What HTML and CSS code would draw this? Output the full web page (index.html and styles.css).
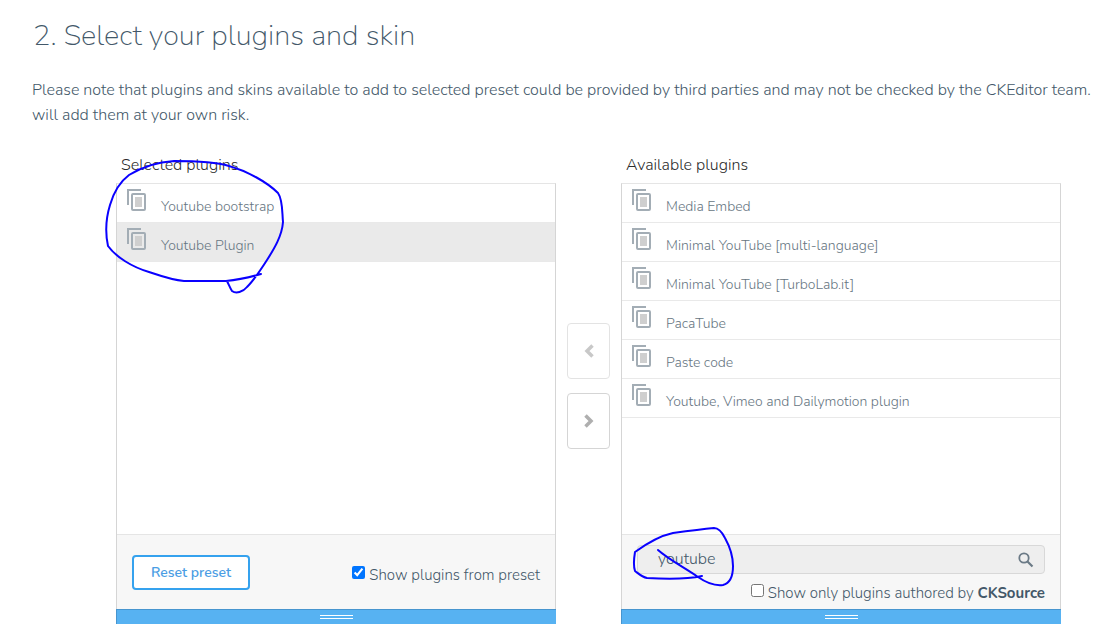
FILE: index.html
```html
<!DOCTYPE html>
<html lang="en">
<head>
    <meta charset="UTF-8">
    <meta name="viewport" content="width=device-width, initial-scale=1.0">
    <title>Select your plugins and skin</title>
    <link rel="stylesheet" href="styles.css">
</head>
<body>
    <svg class="symbols" aria-hidden="true">
        <symbol id="plugin-icon" viewBox="0 0 20 22">
            <path d="M1 16V1H14" fill="none" stroke="#a3adb5" stroke-width="2"/>
            <rect x="5" y="5" width="13" height="16" rx="1" fill="none" stroke="#a3adb5" stroke-width="2"/>
            <rect x="8" y="8" width="7" height="10" fill="#cfcfcf"/>
        </symbol>
    </svg>

    <main class="builder">
        <h1>2. Select your plugins and skin</h1>
        <p class="intro">Please note that plugins and skins available to add to selected preset could be provided by third parties and may not be checked by the CKEditor team.<br>will add them at your own risk.</p>

        <div class="columns">
            <section class="column">
                <h2>Selected plugins</h2>
                <div class="panel">
                    <ul class="plugin-list">
                        <li class="plugin"><svg class="plugin-icon"><use href="#plugin-icon"/></svg><span>Youtube bootstrap</span></li>
                        <li class="plugin plugin-active"><svg class="plugin-icon"><use href="#plugin-icon"/></svg><span>Youtube Plugin</span></li>
                    </ul>
                    <div class="panel-footer preset-footer">
                        <button type="button" class="reset-button">Reset preset</button>
                        <label class="check"><input type="checkbox" checked><span>Show plugins from preset</span></label>
                    </div>
                </div>
                <div class="resize-bar"><span class="grip"></span></div>
            </section>

            <div class="move-buttons">
                <button type="button" class="move-button" aria-label="Add plugin" disabled>
                    <svg width="10" height="14" viewBox="0 0 10 14"><path d="M8.500 1.500L3 7l5.500 5.500" fill="none" stroke="currentColor" stroke-width="3.500"/></svg>
                </button>
                <button type="button" class="move-button" aria-label="Remove plugin">
                    <svg width="10" height="14" viewBox="0 0 10 14"><path d="M1.500 1.500L7 7l-5.500 5.500" fill="none" stroke="currentColor" stroke-width="3.500"/></svg>
                </button>
            </div>

            <section class="column">
                <h2>Available plugins</h2>
                <div class="panel">
                    <ul class="plugin-list">
                        <li class="plugin"><svg class="plugin-icon"><use href="#plugin-icon"/></svg><span>Media Embed</span></li>
                        <li class="plugin"><svg class="plugin-icon"><use href="#plugin-icon"/></svg><span>Minimal YouTube [multi-language]</span></li>
                        <li class="plugin"><svg class="plugin-icon"><use href="#plugin-icon"/></svg><span>Minimal YouTube [TurboLab.it]</span></li>
                        <li class="plugin"><svg class="plugin-icon"><use href="#plugin-icon"/></svg><span>PacaTube</span></li>
                        <li class="plugin"><svg class="plugin-icon"><use href="#plugin-icon"/></svg><span>Paste code</span></li>
                        <li class="plugin"><svg class="plugin-icon"><use href="#plugin-icon"/></svg><span>Youtube, Vimeo and Dailymotion plugin</span></li>
                    </ul>
                    <div class="panel-footer search-footer">
                        <div class="search">
                            <input type="text" class="search-input" aria-label="Search plugins" value="youtube">
                            <svg width="16" height="16" viewBox="0 0 16 16" fill="none" stroke="#6b7a86"><circle cx="6" cy="6" r="4.700" stroke-width="1.800"/><path d="M9.500 9.500L14.500 14.500" stroke-width="2.200"/></svg>
                        </div>
                        <label class="check"><input type="checkbox"><span>Show only plugins authored by <strong>CKSource</strong></span></label>
                    </div>
                </div>
                <div class="resize-bar"><span class="grip"></span></div>
            </section>
        </div>
    </main>

    <!-- pen marks drawn over the page -->
    <svg class="marks" width="1105" height="644" viewBox="0 0 1105 644" aria-hidden="true">
        <path d="M261 274C247 278 236 280 226 281H184C171 280 158 275 149 272C132 267 116 257 108 246C105 232 106 218 110 205C114 191 121 181 129 175C142 167 158 162 174 161C191 161 213 161 229 166C247 171 267 182 278 193C283 200 282 213 283 222C282 236 274 249 267 260C260 271 253 281 247 287C243 292 236 294 232 291C230 288 229 285 227 281"/>
        <path d="M658 550C668 559 685 568 698 577C708 584 715 586 723 585C731 583 733 576 733 566C733 555 730 547 725 538C722 532 719 528 714 528C704 529 688 531 673 533C659 536 646 544 635 552C634 558 633 565 635 571C639 574 642 577 647 578C664 579 684 580 702 576"/>
    </svg>
</body>
</html>
```
FILE: styles.css
```css
* {
    box-sizing: border-box;
}
body {
    margin: 0;
    background-color: #fff;
    color: #435869;
    font-family: Nunito, "Open Sans", sans-serif;
    font-size: 15px;
    font-weight: 350;
    overflow-x: hidden;
}
.symbols {
    display: none;
}
.builder {
    padding-top: 15px;
}
h1 {
    margin: 0 33px 21px;
    font-size: 29px;
    font-weight: 200;
    line-height: 42px;
}
.intro {
    margin: 0 0 24px 32px;
    font-size: 16px;
    line-height: 25px;
    white-space: nowrap;
}
.columns {
    display: grid;
    grid-template-columns: 1fr 43px 1fr;
    gap: 11px;
    padding: 0 44px 0 116px;
}
h2 {
    margin: 0;
    padding: 0 5px;
    height: 31px;
    color: #2b2b2b;
    font-size: 16px;
    font-weight: 300;
    line-height: 27px;
}
.panel {
    display: flex;
    flex-direction: column;
    min-height: 426px;
    border: 1px solid #d5d5d5;
    border-top-color: #e5e5e5;
    border-bottom: none;
}
.plugin-list {
    flex: 1;
    margin: 0;
    padding: 0;
    list-style: none;
}
.plugin {
    display: flex;
    gap: 14px;
    height: 39px;
    padding: 5px 10px 0;
    border-bottom: 1px solid #e9e9e9;
    color: #677682;
    font-size: 14px;
    line-height: 36px;
}
.plugin-active {
    background-color: #eaeaea;
}
.plugin-icon {
    flex: none;
    width: 20px;
    height: 22px;
}
.panel-footer {
    height: 75px;
    border-top: 1px solid #e5e5e5;
    background-color: #f7f7f7;
}
.preset-footer {
    display: flex;
    justify-content: space-between;
    align-items: flex-start;
    padding: 20px 15px 0;
}
.preset-footer .check {
    margin-top: 9px;
}
.reset-button {
    width: 118px;
    height: 35px;
    border: 2px solid #35a2ee;
    border-radius: 4px;
    background-color: #fff;
    color: #4a9de4;
    font-family: inherit;
    font-size: 14px;
    font-weight: 600;
}
.check {
    display: flex;
    align-items: flex-start;
    gap: 4px;
    line-height: 22px;
}
.check input {
    width: 13px;
    height: 13px;
    margin: 2px 0 0;
}
.search-footer {
    padding: 10px 15px 0;
}
.search-footer .check {
    justify-content: flex-end;
    margin-top: 8px;
}
.search {
    display: flex;
    align-items: center;
    height: 29px;
    padding-right: 10px;
    border: 1px solid #d8d8d8;
    border-radius: 4px;
    background-color: #eee;
}
.search-input {
    flex: 1;
    min-width: 0;
    height: 27px;
    padding: 0 20px 2px;
    border: none;
    background: none;
    color: inherit;
    font-family: inherit;
    font-size: 16px;
    font-weight: inherit;
}
.resize-bar {
    display: flex;
    justify-content: center;
    height: 15px;
    padding-top: 5px;
    border: 1px solid #4795cf;
    border-width: 1px 0 0 1px;
    background-color: #57b2f2;
}
.grip {
    width: 33px;
    height: 4px;
    border: 1px solid #fff;
    border-width: 1px 0;
}
.move-buttons {
    display: flex;
    flex-direction: column;
    gap: 14px;
    padding-top: 171px;
}
.move-button {
    display: flex;
    justify-content: center;
    align-items: center;
    height: 56px;
    padding: 0;
    border: 1px solid #d5d5d5;
    border-radius: 4px;
    background-color: #fff;
    color: #afafaf;
}
.move-button:disabled {
    border-color: #e3e3e3;
    color: #c8c8c8;
}
.marks {
    position: absolute;
    top: 0;
    left: 0;
    pointer-events: none;
    fill: none;
    stroke: #0a00ff;
    stroke-width: 2;
    stroke-linecap: round;
    stroke-linejoin: round;
}
```
